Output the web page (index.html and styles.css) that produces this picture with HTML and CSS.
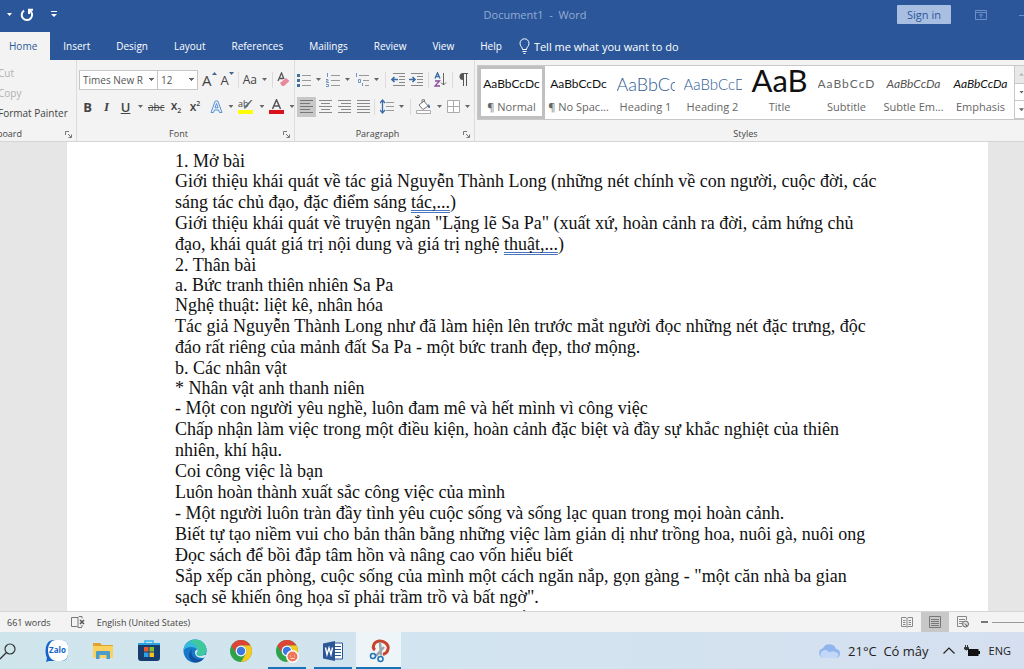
FILE: index.html
```html
<!DOCTYPE html>
<html lang="vi">
<head>
    <meta charset="UTF-8">
    <meta name="viewport" content="width=device-width, initial-scale=1.0">
    <title>Document1 - Word</title>
    <link rel="stylesheet" href="styles.css">
</head>
<body>
    <header class="titlebar">
        <div class="quick">
            <button class="caret light" aria-label="Undo options"></button>
            <button aria-label="Repeat"><svg width="14" height="14" viewBox="0 0 14 14"><path d="M4 2.6A5.2 5.2 0 1 0 9.500 2.4M9 6V1.8h4" fill="none" stroke="#fff" stroke-width="2"/></svg></button>
            <button class="more" aria-label="Customize toolbar"><svg width="6" height="7" viewBox="0 0 6 7"><path d="M0 .5h6" stroke="#fff"/><path d="M0 3h6L3 6z" fill="#fff"/></svg></button>
        </div>
        <h1 class="doc-name">Document1&nbsp; -&nbsp; Word</h1>
        <div class="account">
            <button class="sign-in">Sign in</button>
            <button class="display-opts" aria-label="Ribbon display options"><svg width="12" height="10" viewBox="0 0 12 10"><path d="M.5.5h11v9H.5zM.5 2.500h11M6 8V4M4 5.500L6 4l2 1.500" fill="none" stroke="#6b8fc6"/></svg></button>
            <button aria-label="Minimize"><svg width="10" height="10"><path d="M0 5.500h10" stroke="#6b8fc6"/></svg></button>
        </div>
    </header>

    <nav class="tabs">
        <a class="active" href="#home">Home</a>
        <a href="#insert">Insert</a>
        <a href="#design">Design</a>
        <a href="#layout">Layout</a>
        <a href="#references">References</a>
        <a href="#mailings">Mailings</a>
        <a href="#review">Review</a>
        <a href="#view">View</a>
        <a href="#help">Help</a>
        <button class="tell-me"><svg width="11" height="16" viewBox="0 0 11 16"><path d="M3.500 11.500C3.500 9 1 8.500 1 5.300a4.500 4.500 0 0 1 9 0c0 3.200-2.500 3.700-2.500 6.200zM3.500 13.500h4M4.500 15.500h2" fill="none" stroke="#fff"/></svg>Tell me what you want to do</button>
    </nav>

    <section class="ribbon">
        <div class="group clipboard">
            <div class="clip-list">
                <button class="off">Cut</button>
                <button class="off">Copy</button>
                <button>Format Painter</button>
            </div>
            <div class="label"><span>Clipboard</span></div>
            <svg class="launcher" width="7" height="7" viewBox="0 0 7 7"><path d="M.5 4V.5H4M3 3l3 3M6.500 3.500v3h-3" fill="none" stroke="#777"/></svg>
        </div>

        <div class="group font">
            <div class="row">
                <div class="combos">
                    <select class="combo family" aria-label="Font"><option>Times New R</option></select>
                    <select class="combo size" aria-label="Font size"><option>12</option></select>
                </div>
                <button class="grow" aria-label="Grow font">A<svg width="5" height="4"><path d="M0 3l2.500-3L5 3z" fill="#44658f"/></svg></button>
                <button class="shrink" aria-label="Shrink font">A<svg width="5" height="4"><path d="M0 0h5L2.500 3z" fill="#44658f"/></svg></button>
                <i class="sep"></i>
                <button class="case">Aa</button><button class="caret" aria-label="Case options"></button>
                <i class="sep"></i>
                <button aria-label="Clear formatting"><svg width="13" height="15" viewBox="0 0 13 15"><path d="M1 9L4.500 1 7 7M2 6.500h4" fill="none" stroke="#555" stroke-width="1.300"/><path d="M3 11l6-5 3.500 3L7 14H5z" fill="#e88a9a"/></svg></button>
            </div>
            <div class="row format">
                <button class="fmt bold">B</button>
                <button class="fmt italic">I</button>
                <button class="fmt under">U</button>
                <button class="caret" aria-label="Underline options"></button>
                <button class="strike">abc</button>
                <button class="fmt script">x<sub>2</sub></button>
                <button class="fmt script">x<sup>2</sup></button>
                <i class="sep"></i>
                <button aria-label="Text effects"><svg width="13" height="14" viewBox="0 0 13 14"><path d="M1 12.500L5.200 1h2.600L12 12.500H9.500L8.600 10H4.400l-.9 2.500zM5 7.800h3L6.500 3.500z" fill="#e6f1fc" stroke="#5b93cf"/></svg></button>
                <button class="caret" aria-label="Text effect options"></button>
                <button aria-label="Highlight"><svg width="16" height="15" viewBox="0 0 16 15"><text class="ab" x="0" y="8">ab</text><path d="M14.500 1L8 9l-2 1 .5-2.500L13 1" fill="#666"/><path d="M0 11h15v4H0z" fill="#ff0"/></svg></button>
                <button class="caret" aria-label="Highlight options"></button>
                <button aria-label="Font color"><svg width="15" height="15" viewBox="0 0 15 15"><path d="M3.500 10L7.500.8 11.500 10M5 7h5" fill="none" stroke="#555" stroke-width="1.500"/><path d="M0 11h15v4H0z" fill="#d8131b"/></svg></button>
                <button class="caret" aria-label="Color options"></button>
            </div>
            <div class="label">Font</div>
            <svg class="launcher" width="7" height="7" viewBox="0 0 7 7"><path d="M.5 4V.5H4M3 3l3 3M6.500 3.500v3h-3" fill="none" stroke="#777"/></svg>
        </div>

        <div class="group paragraph">
            <div class="row">
                <button aria-label="Bullets"><svg width="14" height="14" viewBox="0 0 14 14"><path d="M0 1h3v3H0zM0 6h3v3H0zM0 11h3v3H0z" fill="#44709f"/><path d="M5 2.500h10M5 7.500h10M5 12.500h10" stroke="#999"/></svg></button>
                <button class="caret" aria-label="Bullet options"></button>
                <button aria-label="Numbering"><svg width="14" height="14" viewBox="0 0 14 14"><path d="M1.500 0v4M0 6.500h2v1.500H.5v1.500H3M0 11.500h2.500v2H0" fill="none" stroke="#6f97c4"/><path d="M5 2.500h10M5 7.500h10M5 12.500h10" stroke="#999"/></svg></button>
                <button class="caret" aria-label="Numbering options"></button>
                <button aria-label="Multilevel list"><svg width="14" height="14" viewBox="0 0 14 14"><path d="M1.500 0v4M3.500 6.500h2v3h-2zM7.500 10v3" fill="none" stroke="#6f97c4"/><path d="M4 2.500h10M8 7.500h6M10 12.500h4" stroke="#999"/></svg></button>
                <button class="caret" aria-label="Multilevel options"></button>
                <i class="sep"></i>
                <button aria-label="Decrease indent"><svg width="14" height="13" viewBox="0 0 14 13"><path d="M2 .5h12M8 3.500h6M8 6.500h6M8 9.500h6M2 12.500h12" stroke="#888"/><path d="M7 6.500H1M3.500 4L1 6.500 3.500 9" fill="none" stroke="#3c6ba8" stroke-width="1.600"/></svg></button>
                <button aria-label="Increase indent"><svg width="14" height="13" viewBox="0 0 14 13"><path d="M2 .5h12M8 3.500h6M8 6.500h6M8 9.500h6M2 12.500h12" stroke="#888"/><path d="M0 6.500h6M3.500 4L6 6.500 3.500 9" fill="none" stroke="#3c6ba8" stroke-width="1.600"/></svg></button>
                <i class="sep"></i>
                <button aria-label="Sort"><svg width="13" height="15" viewBox="0 0 13 15"><path d="M1 6.500L3.500.8 6 6.500M2 4.500h3" fill="none" stroke="#3c6ba8" stroke-width="1.300"/><path d="M1 9h4.500L1 14h5" fill="none" stroke="#8a4a9c" stroke-width="1.300"/><path d="M9.500 1v12M7 10.500L9.500 13l2.500-2.500" fill="none" stroke="#666"/></svg></button>
                <i class="sep"></i>
                <button aria-label="Show marks"><svg width="10" height="13" viewBox="0 0 10 13"><path d="M5 0v7a3.500 3.500 0 0 1 0-7z" fill="#555"/><path d="M10 .5H4M5.500 0v13M8.500 0v13" stroke="#555"/></svg></button>
            </div>
            <div class="row">
                <button class="align on" aria-label="Align left"><svg width="13" height="15" viewBox="0 0 13 15"><path d="M0 1.500h13M0 4.500h10M0 7.500h13M0 10.500h10M0 13.500h13" stroke="#777"/></svg></button>
                <button class="align" aria-label="Center"><svg width="13" height="15" viewBox="0 0 13 15"><path d="M0 1.500h13M2 4.500h9M0 7.500h13M2 10.500h9M0 13.500h13" stroke="#888"/></svg></button>
                <button class="align" aria-label="Align right"><svg width="13" height="15" viewBox="0 0 13 15"><path d="M0 1.500h13M3 4.500h10M0 7.500h13M3 10.500h10M0 13.500h13" stroke="#888"/></svg></button>
                <button class="align" aria-label="Justify"><svg width="13" height="15" viewBox="0 0 13 15"><path d="M0 1.500h13M0 4.500h13M0 7.500h13M0 10.500h13M0 13.500h13" stroke="#888"/></svg></button>
                <i class="sep"></i>
                <button aria-label="Line spacing"><svg width="14" height="15" viewBox="0 0 14 15"><path d="M2.500 1v13M0 4l2.500-3L5 4M0 11l2.500 3L5 11" fill="none" stroke="#3c6ba8" stroke-width="1.300"/><path d="M6 3.500h8M6 7.500h8M6 11.500h8" stroke="#999"/></svg></button>
                <button class="caret" aria-label="Spacing options"></button>
                <i class="sep"></i>
                <button aria-label="Shading"><svg width="16" height="15" viewBox="0 0 16 15"><path d="M3 6l5-4 4 5-5 3.500zM6 4V.8h2.500V3" fill="#fff" stroke="#777"/><path d="M12.500 5c2 2 2 4 .5 4s-1-2-.5-4z" fill="#3c6ba8"/><path d="M.5 11.500h14v3H.5z" fill="#fff" stroke="#aaa"/></svg></button>
                <button class="caret" aria-label="Shading options"></button>
                <button aria-label="Borders"><svg width="13" height="13" viewBox="0 0 13 13"><path d="M.5.5h12v12H.5zM6.500 0v13M0 6.500h13" fill="#fff" stroke="#aaa"/></svg></button>
                <button class="caret" aria-label="Border options"></button>
            </div>
            <div class="label">Paragraph</div>
            <svg class="launcher" width="7" height="7" viewBox="0 0 7 7"><path d="M.5 4V.5H4M3 3l3 3M6.500 3.500v3h-3" fill="none" stroke="#777"/></svg>
        </div>

        <div class="group styles">
            <div class="gallery">
                <button class="style on"><b>AaBbCcDc</b><span>¶ Normal</span></button>
                <button class="style"><b>AaBbCcDc</b><span>¶ No Spac...</span></button>
                <button class="style"><b class="h1">AaBbCc</b><span>Heading 1</span></button>
                <button class="style"><b class="h2">AaBbCcD</b><span>Heading 2</span></button>
                <button class="style"><b class="title">AaB</b><span>Title</span></button>
                <button class="style"><b class="subtitle">AaBbCcD</b><span>Subtitle</span></button>
                <button class="style"><b class="subtle">AaBbCcDa</b><span>Subtle Em...</span></button>
                <button class="style"><b class="emph">AaBbCcDa</b><span>Emphasis</span></button>
                <div class="scroll">
                    <button class="off" aria-label="Up"><i class="caret up"></i></button>
                    <button aria-label="Down"><i class="caret"></i></button>
                    <button aria-label="More"><i class="caret"></i></button>
                </div>
            </div>
            <div class="label">Styles</div>
        </div>
    </section>

    <main class="workspace">
        <article class="page">
            <h2>1. Mở bài</h2>
            <p>Giới thiệu khái quát về tác giả Nguyễn Thành Long (những nét chính về con người, cuộc đời, các sáng tác chủ đạo, đặc điểm sáng <span class="grammar">tác,...</span>)</p>
            <p>Giới thiệu khái quát về truyện ngắn "Lặng lẽ Sa Pa" (xuất xứ, hoàn cảnh ra đời, cảm hứng chủ đạo, khái quát giá trị nội dung và giá trị nghệ <span class="grammar">thuật,...</span>)</p>
            <h2>2. Thân bài</h2>
            <h2>a. Bức tranh thiên nhiên Sa Pa</h2>
            <p>Nghệ thuật: liệt kê, nhân hóa</p>
            <p>Tác giả Nguyễn Thành Long như đã làm hiện lên trước mắt người đọc những nét đặc trưng, độc đáo rất riêng của mảnh đất Sa Pa - một bức tranh đẹp, thơ mộng.</p>
            <h2>b. Các nhân vật</h2>
            <h2>* Nhân vật anh thanh niên</h2>
            <p>- Một con người yêu nghề, luôn đam mê và hết mình vì công việc</p>
            <p>Chấp nhận làm việc trong một điều kiện, hoàn cảnh đặc biệt và đầy sự khắc nghiệt của thiên nhiên, khí hậu.</p>
            <p>Coi công việc là bạn</p>
            <p>Luôn hoàn thành xuất sắc công việc của mình</p>
            <p>- Một người luôn tràn đầy tình yêu cuộc sống và sống lạc quan trong mọi hoàn cảnh.</p>
            <p>Biết tự tạo niềm vui cho bản thân bằng những việc làm giản dị như trồng hoa, nuôi gà, nuôi ong</p>
            <p>Đọc sách để bồi đắp tâm hồn và nâng cao vốn hiểu biết</p>
            <p>Sắp xếp căn phòng, cuộc sống của mình một cách ngăn nắp, gọn gàng - "một căn nhà ba gian sạch sẽ khiến ông họa sĩ phải trầm trồ và bất ngờ".</p>
            <p>- Một người chân thành, cởi mở và giàu lòng hiếu khách</p>
        </article>
    </main>

    <footer class="status">
        <span>661 words</span>
        <button class="proof" aria-label="Proofing"><svg width="14" height="12" viewBox="0 0 14 12"><path d="M7 1.500H.5v9H6L7 11.500zM7 1.500L8 .5h3M7 11.500h4M11 .5v2M11 9v2" fill="none" stroke="#777"/><path d="M9 4l4 4M13 4L9 8" stroke="#555" stroke-width="1.500"/></svg></button>
        <span>English (United States)</span>
        <div class="views">
            <button aria-label="Read mode"><svg width="12" height="11" viewBox="0 0 12 11"><path d="M.5.500H5l1 1 1-1h4.500v9H7l-1 1-1-1H.5zM6 1v9M2 3.500h2.500M2 5.500h2.500M2 7.500h2.500M7.500 3.500H10M7.500 5.500H10M7.500 7.500H10" fill="none" stroke="#888"/></svg></button>
            <button class="on" aria-label="Print layout"><svg width="12" height="12" viewBox="0 0 12 12"><path d="M.5.500h11v11H.5zM2 3.500h8M2 5.500h8M2 7.500h8M2 9.500h8" fill="none" stroke="#777"/></svg></button>
            <button aria-label="Web layout"><svg width="12" height="12" viewBox="0 0 12 12"><path d="M5 10.500H.5V.500h9V4M2 3.500h6M2 5.500h4M2 7.500h3" fill="none" stroke="#888"/><circle cx="8.500" cy="8" r="3" fill="#ddd" stroke="#666"/><path d="M7 7l3 2v2z" fill="#666"/></svg></button>
            <button class="zoom-out" aria-label="Zoom out"></button>
            <i class="track"></i>
        </div>
    </footer>

    <div class="taskbar">
        <button class="search" aria-label="Search"><svg width="16" height="18" viewBox="0 0 16 18"><circle cx="10" cy="7" r="5" fill="none" stroke="#333" stroke-width="1.200"/><path d="M6.500 10.500L0 17" stroke="#333" stroke-width="1.300"/></svg></button>
        <button class="app" aria-label="Zalo"><svg width="24" height="24" viewBox="0 0 24 24"><path d="M9 1h8a6 6 0 0 1 6 6v9a6 6 0 0 1-6 6H4l-3 1 1-4C0 15 0 9 2 5q2-4 7-4z" fill="#1463c8"/><path d="M11 1h6a6 6 0 0 1 6 6v8a7 7 0 0 1-7 7h-5C5 21 3 16 3 11S6 1 11 1z" fill="#fff"/><text class="zalo" x="4" y="14">Zalo</text></svg></button>
        <button class="app" aria-label="File Explorer"><svg width="24" height="24" viewBox="0 0 24 24"><path d="M2 4h7l2 2h11v5H2z" fill="#e2a22e"/><path d="M2 7h20v12H2z" fill="#fbd15f"/><path d="M5 20v-7q0-1 1-1h12q1 0 1 1v7h-3.500v-4h-7v4z" fill="#4b9cc8"/></svg></button>
        <button class="app" aria-label="Store"><svg width="24" height="24" viewBox="0 0 24 24"><path d="M8 5V2h8v3" fill="none" stroke="#35b5ec" stroke-width="1.500"/><path d="M1 4h22v15a3 3 0 0 1-3 3H4a3 3 0 0 1-3-3z" fill="#153e6e"/><path d="M1 4h22v2H1z" fill="#2da4de"/><path d="M7 8h4.500v4.500H7z" fill="#e9582f"/><path d="M12.500 8H17v4.500h-4.500z" fill="#85bd31"/><path d="M7 13.500h4.500V18H7z" fill="#2aa1e8"/><path d="M12.500 13.500H17V18h-4.500z" fill="#f7bd25"/></svg></button>
        <button class="app" aria-label="Edge"><svg width="24" height="24" viewBox="0 0 24 24"><circle cx="12" cy="12" r="11.500" fill="#1678c8"/><path d="M.5 11.500C1 5 6 .500 12 .500c7 0 11.500 5 11.500 10.500 0 4-3 6-6.500 6-2.500 0-4-1-3.500-2 1-1 1.500-2 1-3.500C13.500 8 5 6 .500 11.500z" fill="#35b9dc"/><path d="M12 .500c7 0 11.500 5 11.500 10.500 0 4-3 6-6.500 6-2.500 0-4-1-3.500-2 1-1 1.500-2 1-3.500C15 6 10 3 5 3z" fill="#43ce88" opacity=".75"/><path d="M9 10c-2 5 1 10 7 10.500 2 .1 4-.5 5-1.500-3 4-7 4.500-9 4.500C6 22 4 15 9 10z" fill="#10509e"/><path d="M14.400 10.500c1 2-1 3.500-1 4.500 1 3 6 2 8 1h2c-1 3-4 3.500-7 2.500-5-1-6-7-2-8z" fill="#d6e8ef"/></svg></button>
        <button class="app" aria-label="Chrome"><svg width="24" height="24" viewBox="0 0 24 24"><circle cx="12" cy="12" r="11" fill="#2fa24c"/><path d="M2.500 6.500A11 11 0 0 1 21.500 6.500H12a5.500 5.500 0 0 0-4.800 8.200z" fill="#dd4336"/><path d="M21.500 6.500A11 11 0 0 1 12 23l4.800-8.300A5.500 5.500 0 0 0 12 6.500z" fill="#fbc91c"/><circle cx="12" cy="12" r="5.400" fill="#fff"/><circle cx="12" cy="12" r="4.200" fill="#3b78e2"/></svg></button>
        <button class="app open" aria-label="Chrome profile"><svg width="24" height="24" viewBox="0 0 24 24"><circle cx="12" cy="12" r="11" fill="#2fa24c"/><path d="M2.500 6.500A11 11 0 0 1 21.500 6.500H12a5.500 5.500 0 0 0-4.800 8.200z" fill="#dd4336"/><path d="M21.500 6.500A11 11 0 0 1 12 23l4.800-8.300A5.500 5.500 0 0 0 12 6.500z" fill="#fbc91c"/><circle cx="12" cy="12" r="5.400" fill="#fff"/><circle cx="12" cy="12" r="4.200" fill="#3b78e2"/><circle cx="17.500" cy="17.500" r="6.500" fill="#fff"/><circle cx="17.500" cy="17.500" r="5" fill="#ee7558"/><path d="M15 17h1M19 17h1M15.500 19.500h4" stroke="#fbe1d4"/></svg></button>
        <button class="app open" aria-label="Word"><svg width="24" height="24" viewBox="0 0 24 24"><path d="M12 4h9.500v16H12z" fill="#fff" stroke="#2b5797"/><path d="M14 7.500h6M14 10.500h6M14 13.500h6M14 16.500h6" stroke="#2b5797"/><path d="M2 4.500L14 2v20L2 19.500z" fill="#2b5797"/><path d="M4.500 8.500l1.500 7 2-6.500 2 6.500 1.500-7" fill="none" stroke="#fff" stroke-width="1.400"/></svg></button>
        <button class="app open current" aria-label="Snipping Tool"><svg width="24" height="24" viewBox="0 0 24 24"><path d="M8 11C5 9 6 3 12 2c6-.5 10 4 9 8-.5 3-2 4.500-5 5.500" fill="#f4f4f4" stroke="#c8432b" stroke-width="3"/><path d="M13 3l1 13.500M17 8L9 17" stroke="#9aa5ae" stroke-width="2.500"/><circle cx="6" cy="17" r="2.500" fill="none" stroke="#2377b5" stroke-width="1.600"/><circle cx="13.500" cy="20" r="2.500" fill="none" stroke="#2377b5" stroke-width="1.600"/></svg></button>
        <div class="tray">
            <svg class="cloud" width="24" height="16" viewBox="0 0 24 16"><path d="M5.500 15a5 5 0 0 1-.5-9.800A7 7 0 0 1 18 6a4.600 4.600 0 0 1 .5 9z" fill="#8fb4ee"/><path d="M4.500 15a4 4 0 0 1 1-7.500c2-1 5 0 6 2 2-2 6-2 9 1.500-.5 3-1.500 4-3.500 4z" fill="#c3d8f8"/></svg>
            <span class="weather">21°C&nbsp; Có mây</span>
            <svg class="chev" width="12" height="7" viewBox="0 0 12 7"><path d="M.5 6.500L6 1l5.500 5.500" fill="none" stroke="#222" stroke-width="1.200"/></svg>
            <svg class="battery" width="16" height="12" viewBox="0 0 16 12"><path d="M4 4h10.500v7H4zM14.500 6H16v3h-1.500z" fill="#111"/><path d="M1.500 0v2.500M3.500 0v2.500M.5 2.500h4V4q-2 2-4 0z" fill="#333" stroke="#333"/></svg>
            <span class="lang">ENG</span>
        </div>
    </div>
</body>
</html>
```
FILE: styles.css
```css
* {
    box-sizing: border-box;
}

body {
    margin: 0;
    height: 100vh;
    display: flex;
    flex-direction: column;
    overflow: hidden;
    font-family: "Open Sans", "Noto Sans", sans-serif;
    font-size: 11px;
    color: #444;
    background: #e6e6e6;
}

button {
    padding: 0;
    border: none;
    background: none;
    font: inherit;
    color: inherit;
    flex: none;
}

svg {
    display: block;
    flex: none;
}

.caret {
    width: 5px;
    height: 3px;
    background: #666;
    clip-path: polygon(0 0, 100% 0, 50% 100%);
}

.caret.light {
    background: #fff;
}

.caret.up {
    background: #bbb;
    clip-path: polygon(50% 0, 100% 100%, 0 100%);
}

/* title bar */
.titlebar {
    display: grid;
    grid-template-columns: 1fr auto 1fr;
    align-items: center;
    height: 32px;
    flex: none;
    padding-bottom: 3px;
    background: #2b579a;
}

.quick {
    display: flex;
    align-items: center;
    padding-left: 7px;
    gap: 8px;
}

.quick .more {
    margin-left: 9px;
}

.doc-name {
    margin: 0 0 0 46px;
    font-size: 11px;
    font-weight: 400;
    color: #95acd3;
}

.account {
    display: flex;
    align-items: center;
    justify-content: flex-end;
    overflow: hidden;
    margin-right: -5px;
}

.sign-in {
    width: 54px;
    height: 19px;
    margin-right: 24px;
    background: #a9bfe2;
    color: #2b579a;
    border-radius: 1px;
}

.display-opts {
    margin-right: 32px;
}

/* tabs */
.tabs {
    display: flex;
    height: 28px;
    flex: none;
    background: #2b579a;
    color: #fff;
}

.tabs a {
    display: flex;
    align-items: center;
    padding: 0 13px;
    font-size: 10px;
    color: #fff;
    text-decoration: none;
}

.tabs .active {
    padding-left: 9px;
    background: #f3f3f3;
    color: #2b579a;
}

.tell-me {
    display: flex;
    align-items: center;
    gap: 4px;
    margin-left: 4px;
}

/* ribbon */
.ribbon {
    display: flex;
    height: 82px;
    flex: none;
    background: #f3f3f3;
    border-bottom: 1px solid #d5d5d5;
    overflow: hidden;
}

.group {
    position: relative;
    display: flex;
    flex-direction: column;
    flex: none;
    padding: 6px 0 0 2px;
    border-right: 1px solid #dcdcdc;
}

.label {
    margin-top: auto;
    padding-right: 16px;
    line-height: 14px;
    font-size: 9px;
    text-align: center;
}

.launcher {
    position: absolute;
    right: 4px;
    bottom: 3px;
}

.row {
    display: flex;
    align-items: center;
    height: 27px;
    gap: 4px;
}

.row .caret {
    margin: 0 1px;
}

.format {
    padding-left: 1px;
}

.sep {
    width: 1px;
    height: 16px;
    background: #dcdcdc;
}

.off {
    color: #b1b1b1;
}

.clipboard {
    width: 77px;
    padding: 3px 0 0;
}

.clip-list {
    display: flex;
    flex-direction: column;
    align-items: flex-start;
    margin-left: -2px;
}

.clip-list button {
    line-height: 20px;
    font-size: 10px;
    white-space: nowrap;
}

.clipboard .label {
    display: flex;
    justify-content: flex-end;
    width: 22px;
    padding: 0;
}

.font {
    width: 218px;
}

.combos {
    display: flex;
}

.combo {
    appearance: none;
    height: 20px;
    padding: 0 3px;
    border: 1px solid #c6c6c6;
    border-radius: 0;
    background: conic-gradient(from -45deg at 50% 100%, #666 90deg, transparent 0) no-repeat right 3px center / 5px 3px #fff;
    font: inherit;
    font-size: 10px;
    color: #555;
}

.family {
    width: 79px;
}

.size {
    width: 40px;
    border-left: none;
}

.grow, .shrink {
    display: flex;
    align-items: flex-start;
    line-height: 16px;
    font-size: 15px;
}

.shrink {
    font-size: 13px;
}

.case {
    font-size: 12px;
}

.fmt {
    width: 15px;
    font-size: 13px;
    font-weight: 700;
}

.italic {
    font-family: "Liberation Serif", serif;
    font-style: italic;
}

.under {
    text-decoration: underline;
    font-weight: 600;
}

.strike {
    font-size: 10px;
    text-decoration: line-through;
}

.script {
    line-height: 14px;
    font-size: 12px;
    font-weight: 600;
}

.script sub, .script sup {
    font-size: 7px;
    line-height: 7px;
}

.ab {
    font-size: 9px;
    fill: #444;
}

.paragraph {
    width: 180px;
}

.paragraph .sep {
    margin: 0 1px;
}

.align {
    display: flex;
    align-items: center;
    justify-content: center;
    width: 19px;
    height: 20px;
    margin-right: -4px;
}

.align.on {
    background: #c8c8c8;
}

.styles {
    flex: 1;
    min-width: 0;
    padding: 5px 0 0 2px;
    border-right: none;
}

.styles .label {
    padding-right: 10px;
}

.gallery {
    display: flex;
    height: 55px;
    border: 1px solid #c8c8c8;
    border-right: none;
    background: #fff;
}

.style {
    display: flex;
    flex-direction: column;
    align-items: center;
    flex: 1;
    min-width: 0;
    overflow: hidden;
    color: #666;
}

.style.on {
    outline: 3px solid #c0c0c0;
    outline-offset: -3px;
}

.style b {
    height: 33px;
    line-height: 36px;
    max-width: 58px;
    overflow: hidden;
    font-family: Lato, sans-serif;
    font-size: 12px;
    font-weight: 400;
    color: #111;
    white-space: nowrap;
}

.style .h1 {
    font-size: 18px;
    font-weight: 300;
    color: #2e5c95;
}

.style .h2 {
    font-size: 15px;
    font-weight: 300;
    color: #2e5c95;
}

.style .title {
    font-size: 31px;
    font-weight: 400;
    line-height: 28px;
}

.style .subtitle {
    color: #666;
    letter-spacing: 1px;
}

.style .subtle {
    color: #555;
    font-style: italic;
}

.style .emph {
    font-style: italic;
}

.style span {
    line-height: 16px;
}

.scroll {
    display: flex;
    flex-direction: column;
    flex: none;
    width: 10px;
    border-left: 1px solid #c8c8c8;
}

.scroll button {
    display: flex;
    align-items: center;
    justify-content: flex-end;
    flex: 1;
    border-bottom: 1px solid #c8c8c8;
}

.scroll .off {
    background: #e8e8e8;
}

/* document */
.workspace {
    flex: 1;
    min-height: 0;
    overflow: hidden;
    padding: 0 36px 0 67px;
    background: #e6e6e6;
}

.page {
    min-height: 100%;
    padding: 9px 107px 0 108px;
    background: #fff;
    font-family: "Liberation Serif", "Times New Roman", serif;
    font-size: 18px;
    color: #111;
}

.page p, .page h2 {
    margin: 0;
    line-height: 21px;
}

.page h2 {
    font-size: 18px;
    font-weight: 400;
    line-height: 20px;
}

.grammar {
    text-decoration: underline double #4a76c0 1px;
    text-decoration-skip-ink: none;
    text-underline-offset: 2px;
}

/* status bar */
.status {
    display: flex;
    align-items: center;
    height: 21px;
    flex: none;
    padding-left: 7px;
    background: #f3f3f3;
    border-top: 1px solid #d5d5d5;
    font-size: 9px;
}

.proof {
    margin: 0 12px 0 20px;
}

.views {
    display: flex;
    align-items: center;
    align-self: stretch;
    margin-left: auto;
}

.views button {
    display: flex;
    align-items: center;
    justify-content: center;
    align-self: stretch;
    width: 28px;
}

.views .on {
    background: #c8c8c8;
}

.views .zoom-out {
    align-self: center;
    width: 7px;
    height: 2px;
    margin: 0 4px;
    background: #777;
}

.track {
    width: 32px;
    height: 1px;
    background: #999;
}

/* taskbar */
.taskbar {
    display: flex;
    align-items: center;
    height: 37px;
    flex: none;
    background: linear-gradient(90deg, #cfe5ec, #d3e4f0 50%, #d5dfef);
    color: #222;
}

.search {
    width: 34px;
}

.app {
    display: flex;
    align-items: center;
    justify-content: center;
    align-self: stretch;
    width: 45px;
    margin-right: 1px;
}

.app.open {
    background: linear-gradient(#1a73b8, #1a73b8) no-repeat center bottom / 38px 2px;
}

.app.current {
    background: linear-gradient(#1a73b8, #1a73b8) no-repeat center bottom / 45px 2px, #eef5f9;
}

.zalo {
    font-size: 8px;
    font-weight: 700;
    fill: #1463c8;
}

.tray {
    display: flex;
    align-items: center;
    margin-left: auto;
    padding-right: 13px;
}

.weather {
    margin: 0 14px 0 6px;
    font-size: 13px;
}

.battery {
    margin: 0 9px;
}

.lang {
    font-size: 11px;
}
```
